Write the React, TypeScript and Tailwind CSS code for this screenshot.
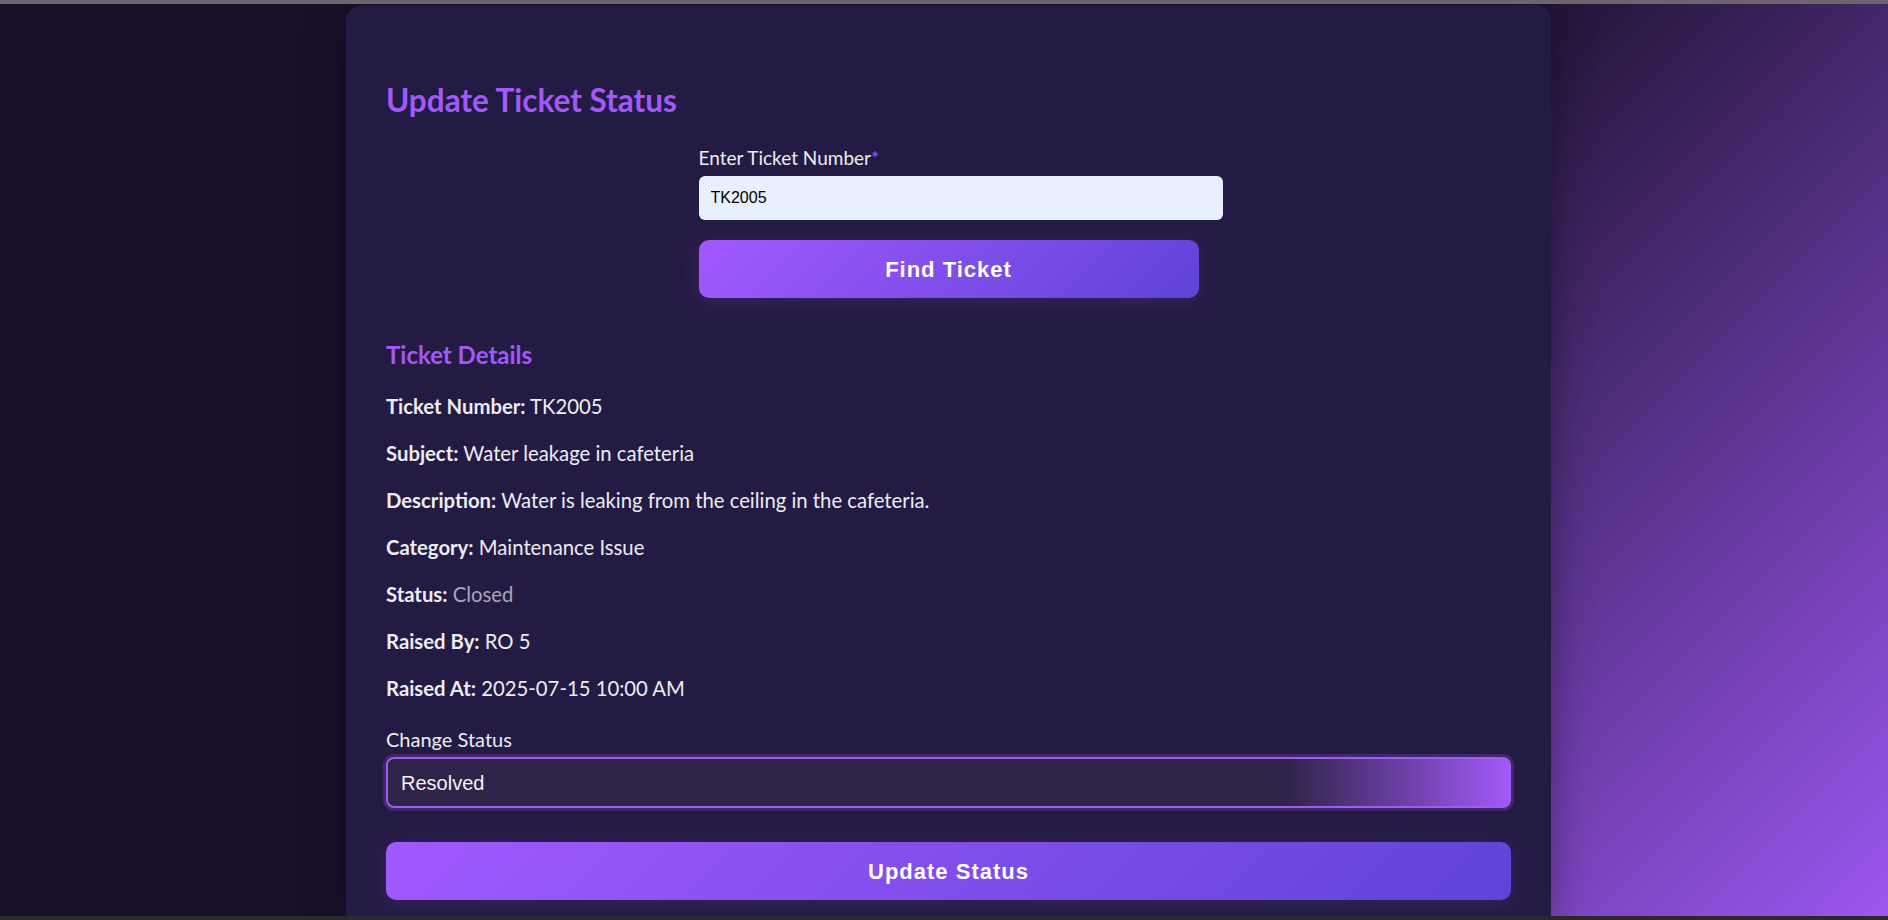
import React, { useState } from 'react';

const details: { label: string; value: string; muted?: boolean }[] = [
  { label: 'Ticket Number:', value: 'TK2005' },
  { label: 'Subject:', value: 'Water leakage in cafeteria' },
  { label: 'Description:', value: 'Water is leaking from the ceiling in the cafeteria.' },
  { label: 'Category:', value: 'Maintenance Issue' },
  { label: 'Status:', value: 'Closed', muted: true },
  { label: 'Raised By:', value: 'RO 5' },
  { label: 'Raised At:', value: '2025-07-15 10:00 AM' },
];

export default function App() {
  const [ticketNumber, setTicketNumber] = useState('TK2005');
  const [status, setStatus] = useState('Resolved');

  return (
    <div className="w-[1888px] h-[920px] flex flex-col overflow-hidden font-['Lato',sans-serif]">
      {/* window edge */}
      <div className="h-[4px] bg-[#6e6470] shrink-0" />

      <div className="flex-1 overflow-hidden bg-[linear-gradient(135deg,#181029_0%,#181029_52%,#9c56ef_100%)]">
        {/* Card */}
        <div className="ml-[346px] mt-[1px] w-[1205px] h-full rounded-t-[16px] bg-[#241b44] shadow-[0_8px_40px_rgba(0,0,0,0.35)] px-[40px] pt-[77px]">
          <h1 className="text-[31.5px] leading-[36px] font-bold text-[#a259f7]">Update Ticket Status</h1>

          {/* Search form */}
          <div className="mx-auto w-[500px] mt-[28px]">
            <label className="block text-[19px] leading-[24px] text-[#ececf1]">
              Enter Ticket Number<span className="text-[#a259f7]">*</span>
            </label>
            <input
              type="text"
              value={ticketNumber}
              onChange={(e) => setTicketNumber(e.target.value)}
              className="mt-[6px] block w-[524px] h-[44px] px-[12px] rounded-[6px] bg-[#e8f0fe] text-black text-[16px] font-['Liberation_Sans',Arial,sans-serif] outline-none"
            />
            <button className="mt-[20px] w-[500px] h-[58px] rounded-[10px] bg-[linear-gradient(135deg,#a259ff,#5f43d7)] text-white text-[22px] tracking-[1px] font-bold font-['Liberation_Sans',Arial,sans-serif] shadow-[0_4px_20px_rgba(162,89,255,0.15)]">
              Find Ticket
            </button>
          </div>

          {/* Ticket details */}
          <h3 className="mt-[43px] text-[24px] leading-[28px] font-bold text-[#a259f7]">Ticket Details</h3>
          <div className="mt-[25px] flex flex-col gap-[23px]">
            {details.map((d) => (
              <p key={d.label} className="text-[20.3px] leading-[24px] text-[#ececf1]">
                <strong className="font-bold">{d.label}</strong>{' '}
                <span className={d.muted ? 'text-[#aaa6b8]' : ''}>{d.value}</span>
              </p>
            ))}
          </div>

          <label className="block mt-[27px] text-[20px] leading-[24px] text-[#ececf1]">Change Status</label>
          <select
            value={status}
            onChange={(e) => setStatus(e.target.value)}
            className="mt-[6px] block w-full h-[51px] px-[13px] appearance-none rounded-[8px] border-2 border-[#a259f7] bg-[linear-gradient(90deg,#2e2448_80%,#a259f7_100%)] text-[#f2f0f8] text-[20px] font-['Liberation_Sans',Arial,sans-serif] shadow-[0_0_0_3px_rgba(162,89,247,0.22)] outline-none"
          >
            <option>Open</option>
            <option>In Progress</option>
            <option>Resolved</option>
            <option>Closed</option>
          </select>

          <button className="mt-[34px] w-full h-[58px] rounded-[10px] bg-[linear-gradient(135deg,#a259ff,#5f43d7)] text-white text-[22px] tracking-[1px] font-bold font-['Liberation_Sans',Arial,sans-serif] shadow-[0_4px_20px_rgba(162,89,255,0.15)]">
            Update Status
          </button>
        </div>
      </div>

      <div className="h-[4px] bg-[#2a2a2a] shrink-0" />
    </div>
  );
}
